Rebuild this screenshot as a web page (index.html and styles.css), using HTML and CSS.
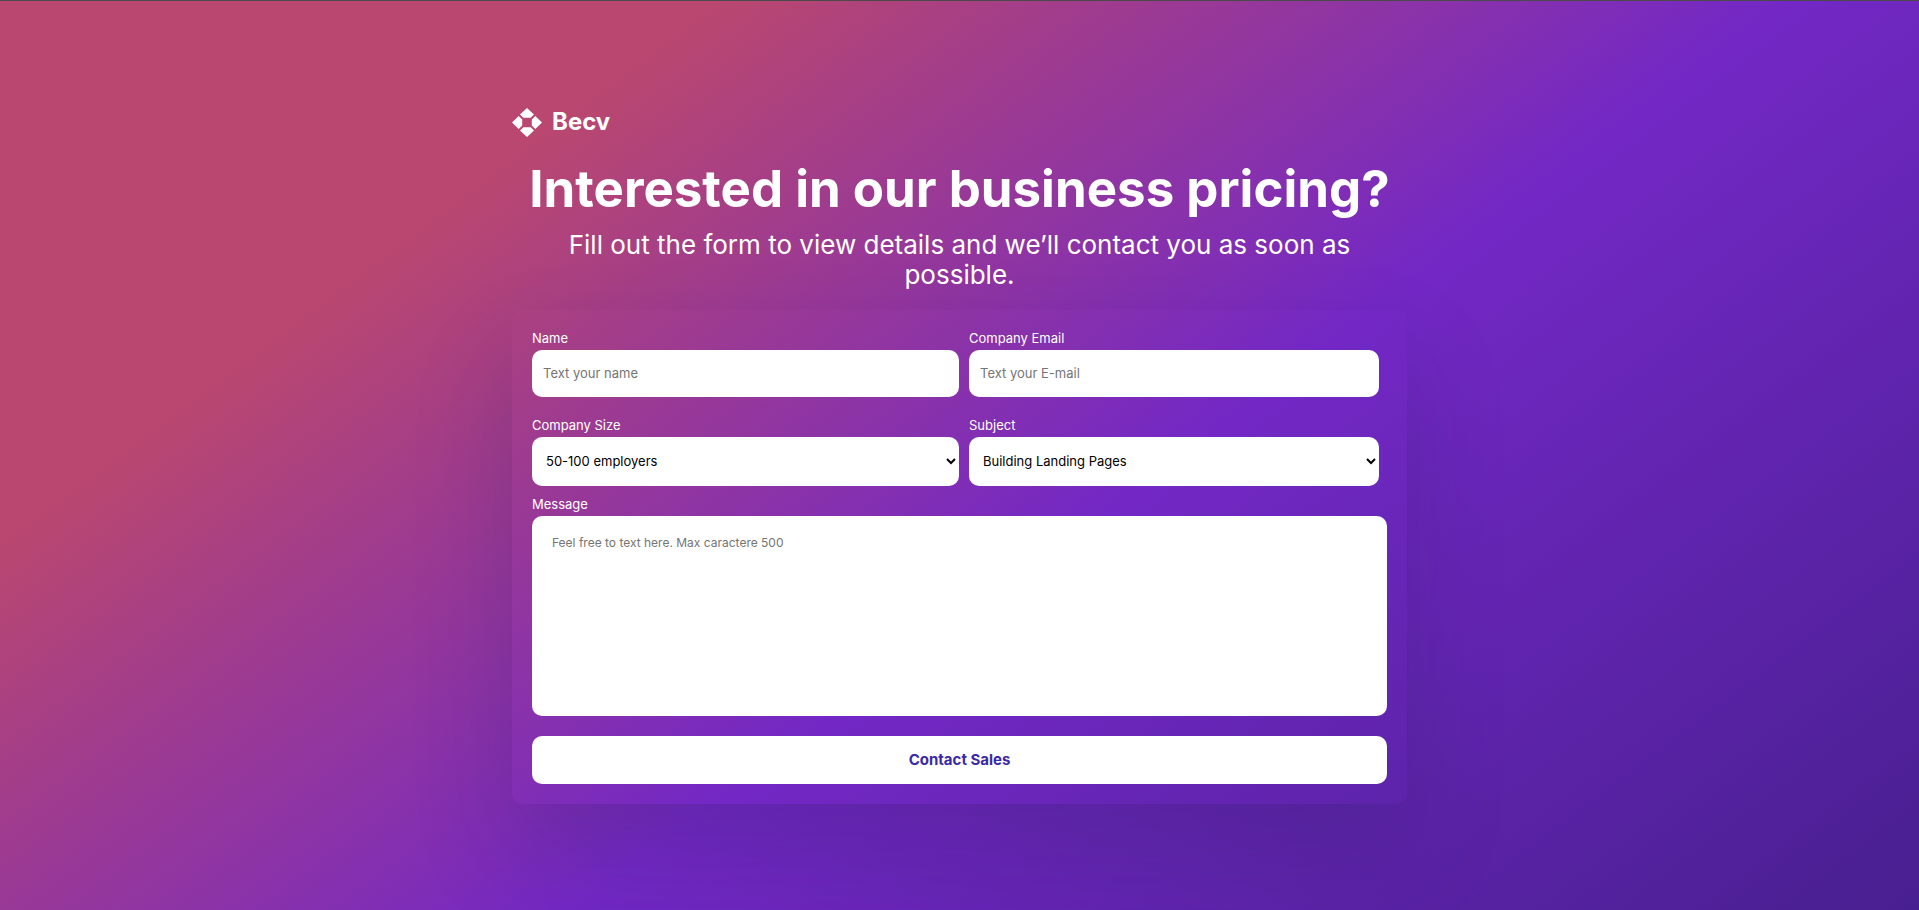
FILE: index.html
```html
<!DOCTYPE html>
<html lang="en">
<head>
<meta charset="utf-8">
<meta name="viewport" content="width=device-width, initial-scale=1">
<title>Becv - Business pricing</title>
<link rel="stylesheet" href="styles.css">
</head>
<body>
<main class="page">
  <div class="content">
    <header class="intro">
      <a class="logo" href="#">
        <svg class="logo-mark" viewBox="0 0 30 29" aria-hidden="true">
          <path d="M15 0l7 6.600-3.400 3.200h-7.200L8 6.600zM15 29l7-6.600-3.400-3.200h-7.200L8 22.400zM0 14.500L6.700 8l3.500 3.400v6.200L6.700 21zM30 14.500L23.300 8l-3.500 3.400v6.200l3.500 3.400z" fill="currentColor"/>
        </svg>
        <span>Becv</span>
      </a>
      <h1 class="title">Interested in our business pricing?</h1>
      <p class="subtitle">Fill out the form to view details and we’ll contact you as soon as possible.</p>
    </header>
    <form class="form">
      <div class="fields">
        <div class="field">
          <label for="name">Name</label>
          <input class="control" id="name" type="text" placeholder="Text your name">
        </div>
        <div class="field">
          <label for="email">Company Email</label>
          <input class="control" id="email" type="email" placeholder="Text your E-mail">
        </div>
        <div class="field">
          <label for="size">Company Size</label>
          <select class="control select" id="size"><option>50-100 employers</option></select>
        </div>
        <div class="field">
          <label for="subject">Subject</label>
          <select class="control select" id="subject"><option>Building Landing Pages</option></select>
        </div>
      </div>
      <div class="field message">
        <label for="message">Message</label>
        <textarea class="control textarea" id="message" placeholder="Feel free to text here. Max caractere 500"></textarea>
      </div>
      <button class="submit" type="submit">Contact Sales</button>
    </form>
  </div>
</main>
</body>
</html>
```
FILE: styles.css
```css
* {
  box-sizing: border-box;
  margin: 0;
  padding: 0;
}

body {
  font-family: Inter, "Liberation Sans", sans-serif;
  color: #fff;
}

.page {
  min-height: 100vh;
  display: flex;
  justify-content: center;
  align-items: center;
  border-top: 1px solid #4a4a4a;
  background: linear-gradient(143deg, #b9476f 23%, #7328c5 57%, #481f90 100%);
}

.content {
  width: 100%;
  max-width: 895px;
}

.logo {
  display: inline-flex;
  align-items: center;
  gap: 10px;
  color: #fff;
  font-size: 24px;
  line-height: 30px;
  font-weight: 700;
  text-decoration: none;
}

.logo-mark {
  width: 30px;
  height: 29px;
}

.title {
  margin-top: 16px;
  font-size: 51px;
  line-height: 64px;
  font-weight: 700;
  text-align: center;
}

.subtitle {
  margin: 9px 0 20px;
  padding: 0 48px;
  font-size: 26px;
  line-height: 30px;
  font-weight: 400;
  text-align: center;
}

.form {
  padding: 20px;
  border-radius: 10px;
  box-shadow: 0 50px 100px rgba(33, 28, 80, 0.2);
}

.fields {
  display: grid;
  grid-template-columns: 427fr 410fr;
  gap: 20px 10px;
  padding-right: 8px;
}

.field {
  display: flex;
  flex-direction: column;
  gap: 4px;
  font-size: 13px;
  line-height: 16px;
}

.control {
  width: 100%;
  height: 47px;
  padding: 0 11px;
  border: 0;
  border-radius: 10px;
  background: #fff;
  color: #000;
  font-family: inherit;
  font-size: 13px;
}

.control::placeholder {
  color: #757575;
}

.select {
  height: 49px;
  padding: 0 10px;
}

.message {
  margin-top: 10px;
}

.textarea {
  height: 200px;
  padding: 20px;
  font-size: 12px;
  line-height: 14px;
  resize: none;
}

.submit {
  width: 100%;
  height: 48px;
  margin-top: 20px;
  border: 0;
  border-radius: 10px;
  background: #fff;
  color: #3a2aa8;
  font-family: inherit;
  font-size: 15px;
  font-weight: 700;
}
```
